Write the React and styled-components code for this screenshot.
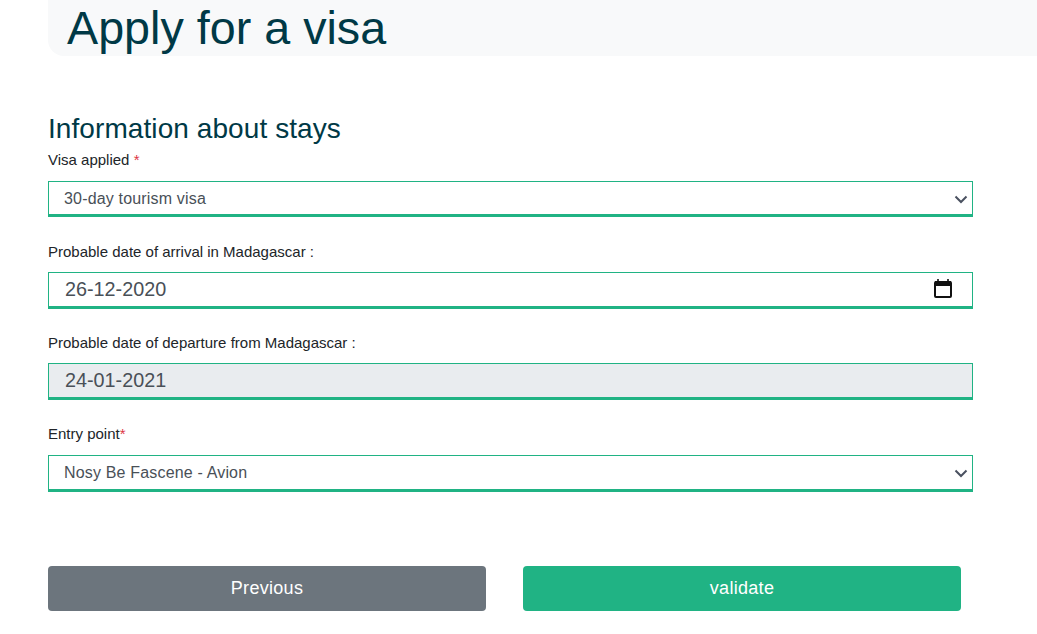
import React from "react";
import styled, { createGlobalStyle } from "styled-components";

const Global = createGlobalStyle`
  html, body { margin: 0; padding: 0; background: #fff; overflow: hidden; }
  body { font-family: "Liberation Sans", Arial, sans-serif; }
`;

const Page = styled.div`
  width: 1037px;
  height: 634px;
  padding-left: 48px;
  box-sizing: border-box;
`;

const Banner = styled.header`
  height: 56px;
  background: #f8f9fa;
  border-bottom-left-radius: 16px;
  padding-left: 19px;
  overflow: hidden;
`;

const Title = styled.h1`
  margin: 0;
  font-size: 46.7px;
  font-weight: 400;
  line-height: 56px;
  color: #003946;
`;

const Form = styled.form`
  width: 925px;
  padding-top: 56px;
`;

const Section = styled.h2`
  margin: 0 0 3.3px;
  font-size: 28px;
  letter-spacing: 0.08px;
  font-weight: 400;
  line-height: 34px;
  color: #003946;
`;

const Field = styled.div`
  margin-bottom: 23.2px;
`;

const Label = styled.label`
  display: block;
  font-size: 15px;
  line-height: 21px;
  margin-bottom: 10.3px;
  color: #212529;
`;

const Star = styled.span`
  color: #dc3545;
`;

const Control = styled.div`
  position: relative;
  height: 36.9px;
`;

const inputLook = `
  display: block;
  width: 100%;
  height: 100%;
  box-sizing: border-box;
  border: 1px solid #20b384;
  border-bottom-width: 3px;
  border-radius: 0;
  outline: none;
  margin: 0;
  font-family: "Liberation Sans", Arial, sans-serif;
  color: #495057;
`;

const Select = styled.select`
  ${inputLook}
  appearance: none;
  background: #fff;
  font-size: 16px;
  letter-spacing: 0.17px;
  padding: 0 30px 0 15px;
`;

const DateInput = styled.input`
  ${inputLook}
  background: ${(p) => (p.disabled ? "#e9ecef" : "#fff")};
  font-size: 19.8px;
  padding: 0 40px 0 16px;
  &:disabled { opacity: 1; color: #495057; }
`;

const Chevron = styled.svg`
  position: absolute;
  right: 4px;
  top: 12px;
  width: 16px;
  height: 12px;
  pointer-events: none;
`;

const CalendarIcon = styled.svg`
  position: absolute;
  right: 21px;
  top: 7px;
  width: 18px;
  height: 19px;
  pointer-events: none;
`;

const Actions = styled.div`
  display: flex;
  gap: 37px;
  margin-top: 74.5px;
`;

const Button = styled.button`
  width: 438px;
  height: 45px;
  border: 0;
  border-radius: 4px;
  font-family: "Liberation Sans", Arial, sans-serif;
  font-size: 18px;
  letter-spacing: 0.3px;
  color: #fff;
  background: ${(p) => (p.$primary ? "#20b384" : "#6c757d")};
`;

const Arrow = () => (
  <Chevron viewBox="0 0 16 12" aria-hidden="true">
    <path d="M2.5 3.5 L8 9 L13.5 3.5" fill="none" stroke="#4a5160" strokeWidth="2" />
  </Chevron>
);

const Calendar = () => (
  <CalendarIcon viewBox="0 0 18 19" aria-hidden="true">
    <rect x="1" y="3" width="16" height="15" rx="1" fill="none" stroke="#111" strokeWidth="2" />
    <rect x="1" y="2" width="16" height="5" fill="#111" />
    <rect x="3.2" y="0" width="1.6" height="3" fill="#111" />
    <rect x="13.2" y="0" width="1.6" height="3" fill="#111" />
  </CalendarIcon>
);

export default function App() {
  return (
    <Page>
      <Global />
      <Banner>
        <Title>Apply for a visa</Title>
      </Banner>
      <Form>
        <Section>Information about stays</Section>
        <Field>
          <Label>Visa applied <Star>*</Star></Label>
          <Control>
            <Select defaultValue="a">
              <option value="a">30-day tourism visa</option>
            </Select>
            <Arrow />
          </Control>
        </Field>
        <Field>
          <Label>Probable date of arrival in Madagascar :</Label>
          <Control>
            <DateInput type="text" defaultValue="26-12-2020" />
            <Calendar />
          </Control>
        </Field>
        <Field>
          <Label>Probable date of departure from Madagascar :</Label>
          <Control>
            <DateInput type="text" defaultValue="24-01-2021" disabled />
          </Control>
        </Field>
        <Field>
          <Label>Entry point<Star>*</Star></Label>
          <Control>
            <Select defaultValue="a">
              <option value="a">Nosy Be Fascene - Avion</option>
            </Select>
            <Arrow />
          </Control>
        </Field>
        <Actions>
          <Button type="button">Previous</Button>
          <Button type="button" $primary>validate</Button>
        </Actions>
      </Form>
    </Page>
  );
}
